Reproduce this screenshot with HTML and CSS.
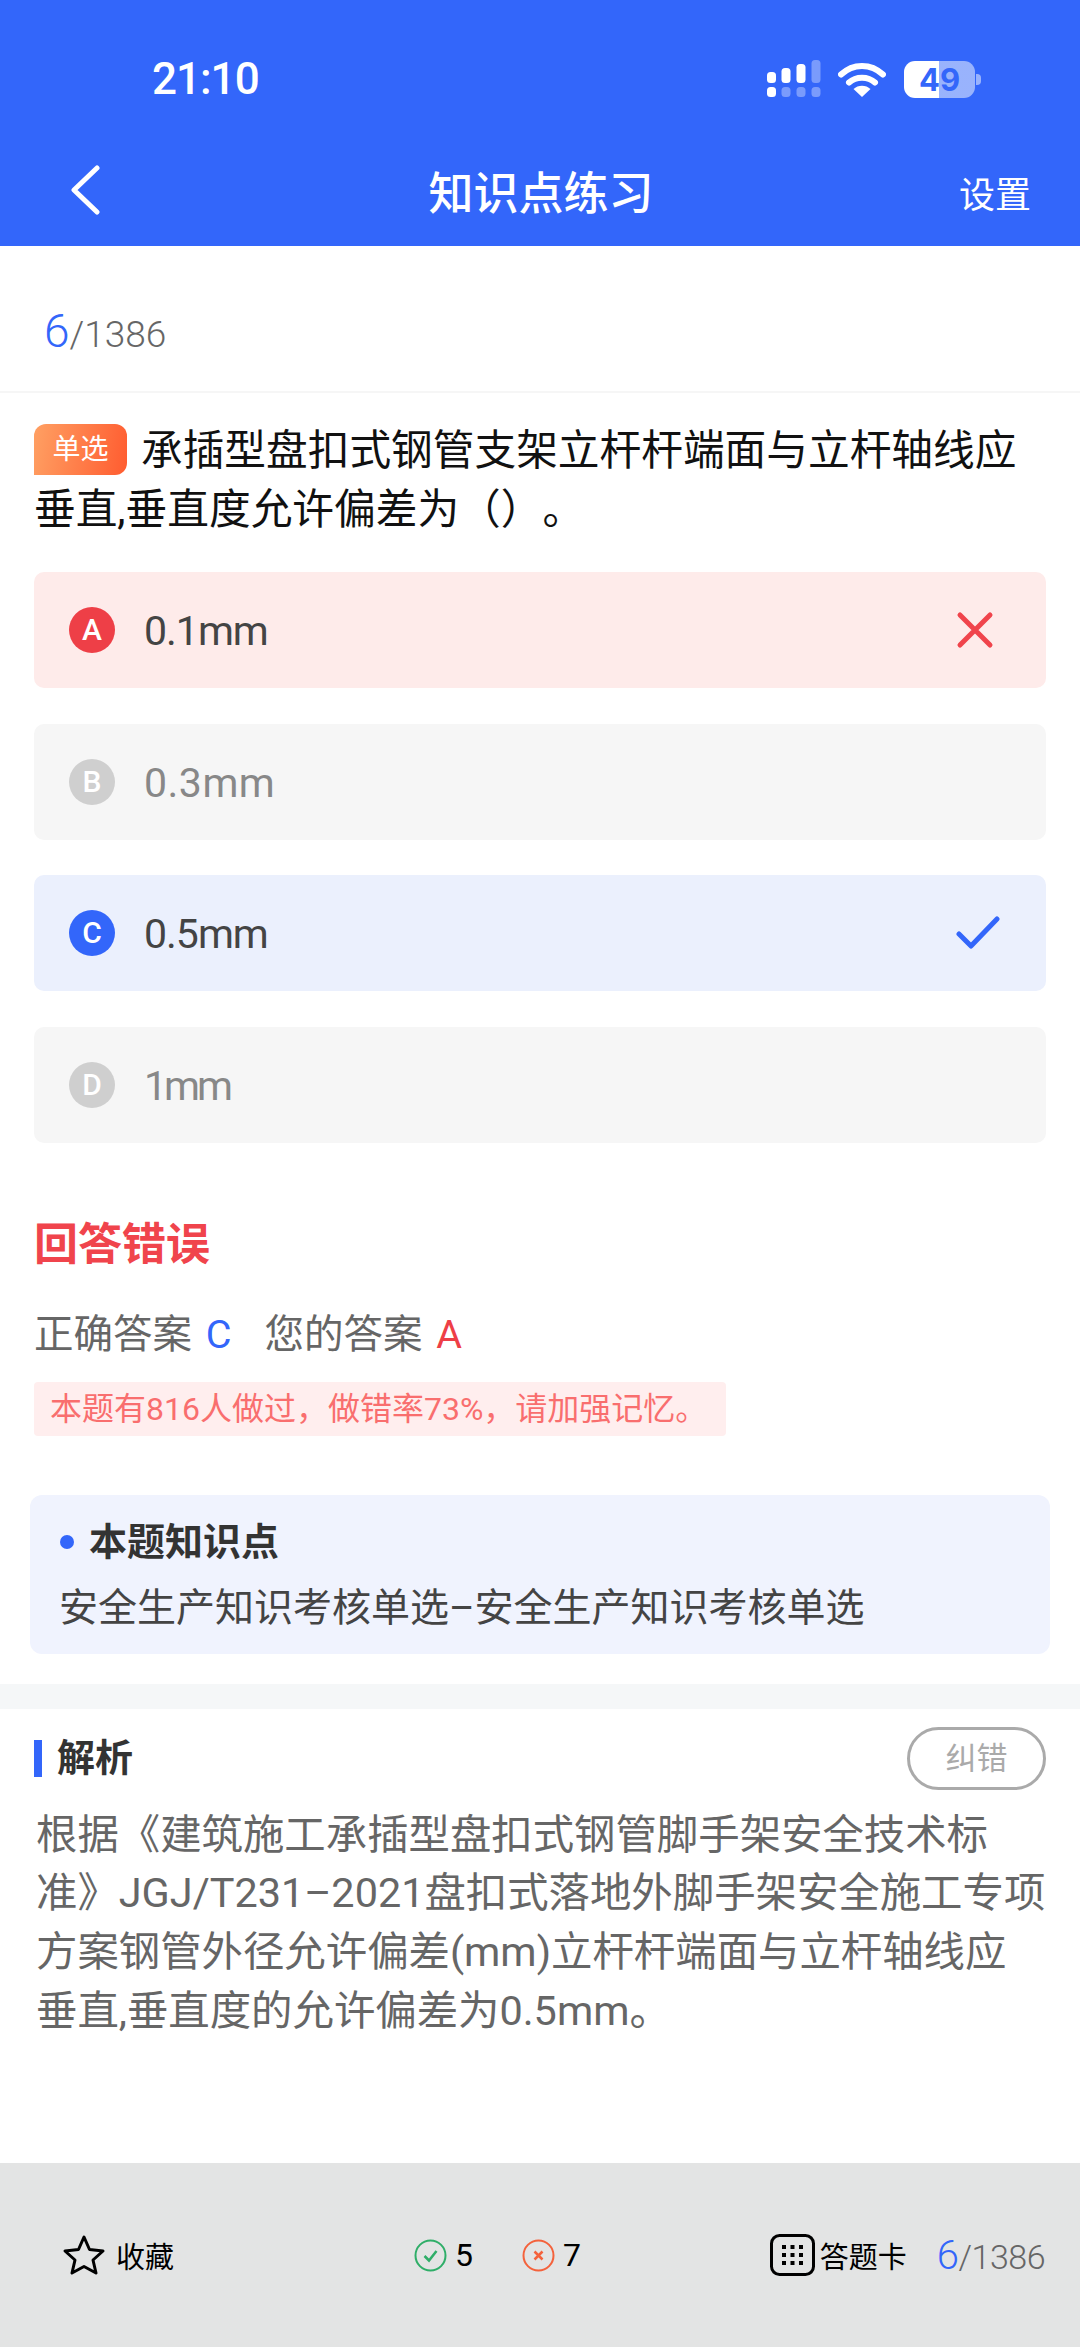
FILE: index.html
```html
<!DOCTYPE html>
<html lang="zh-CN">
<head>
	<meta charset="utf-8">
	<title>知识点练习</title>
	<link rel="stylesheet" href="styles.css">
</head>
<body>
<div class="page">
	<header class="top">
		<div class="status">
			<span class="time">21:10</span>
			<div class="status-icons">
				<svg class="signal" width="54" height="38" viewBox="0 0 54 38">
					<rect x="0" y="12" width="9" height="11" rx="3.5" fill="#fff"/>
					<rect x="14.500" y="8" width="9" height="15" rx="3.5" fill="#fff"/>
					<rect x="29.500" y="4" width="9" height="19" rx="3.5" fill="#fff"/>
					<rect x="44.500" y="0" width="9" height="23" rx="3.5" fill="#fff" fill-opacity=".35"/>
					<rect x="0" y="27" width="9" height="10" rx="3.500" fill="#fff"/>
					<rect x="14.500" y="27" width="9" height="10" rx="3.500" fill="#fff" fill-opacity=".35"/>
					<rect x="29.500" y="27" width="9" height="10" rx="3.500" fill="#fff" fill-opacity=".35"/>
					<rect x="44.500" y="27" width="9" height="10" rx="3.500" fill="#fff" fill-opacity=".35"/>
				</svg>
				<svg class="wifi" width="48" height="35" viewBox="0 0 48 35">
					<path d="M3 12.500 C15 1 33 1 45 12.500" fill="none" stroke="#fff" stroke-width="6" stroke-linecap="round"/>
					<path d="M11 20.500 C18 14 30 14 37 20.500" fill="none" stroke="#fff" stroke-width="6" stroke-linecap="round"/>
					<path d="M15.500 27 C20 22.500 28 22.500 32.500 27 L24 35 Z" fill="#fff"/>
				</svg>
				<div class="battery">
					<div class="battery-body">49</div>
					<div class="battery-nub"></div>
				</div>
			</div>
		</div>
		<nav class="nav">
			<svg class="back" width="30" height="50" viewBox="0 0 30 50">
				<path d="M27 3 L4 25 L27 47" fill="none" stroke="#fff" stroke-width="5" stroke-linecap="round" stroke-linejoin="round"/>
			</svg>
			<h1 class="nav-title">知识点练习</h1>
			<span class="nav-set">设置</span>
		</nav>
	</header>

	<main class="main">
		<div class="count-row">
			<span class="count"><span class="count-now">6</span>/1386</span>
		</div>

		<section class="question">
			<p class="q-text"><span class="tag">单选</span>承插型盘扣式钢管支架立杆杆端面与立杆轴线应垂直,垂直度允许偏差为（）。</p>
			<div class="options">
				<div class="option wrong">
					<span class="letter">A</span>
					<span class="opt-text">0.1mm</span>
					<svg class="opt-icon" width="38" height="38" viewBox="0 0 38 38">
						<path d="M4 4 L34 34 M34 4 L4 34" fill="none" stroke="#f0444c" stroke-width="5" stroke-linecap="round"/>
					</svg>
				</div>
				<div class="option muted">
					<span class="letter">B</span>
					<span class="opt-text wide">0.3mm</span>
				</div>
				<div class="option right">
					<span class="letter">C</span>
					<span class="opt-text">0.5mm</span>
					<svg class="opt-icon" width="44" height="38" viewBox="0 0 44 38">
						<path d="M3 20 L15 32 L41 5" fill="none" stroke="#3366fa" stroke-width="5" stroke-linecap="round" stroke-linejoin="round"/>
					</svg>
				</div>
				<div class="option muted">
					<span class="letter">D</span>
					<span class="opt-text tight">1mm</span>
				</div>
			</div>
		</section>

		<section class="result">
			<h2 class="result-title">回答错误</h2>
			<p class="answers">正确答案 <span class="ans-blue">C</span><span class="ans-mine">您的答案 <span class="ans-red">A</span></span></p>
			<p class="notice">本题有816人做过，做错率73%，请加强记忆。</p>
		</section>

		<section class="point">
			<h3 class="point-title"><span class="point-dot"></span>本题知识点</h3>
			<p class="point-text">安全生产知识考核单选–安全生产知识考核单选</p>
		</section>

		<div class="stripe"></div>

		<section class="analysis">
			<div class="analysis-head">
				<h3 class="analysis-title">解析</h3>
				<span class="report">纠错</span>
			</div>
			<p class="analysis-text">根据《建筑施工承插型盘扣式钢管脚手架安全技术标准》JGJ/T231–2021盘扣式落地外脚手架安全施工专项方案钢管外径允许偏差(mm)立杆杆端面与立杆轴线应垂直,垂直度的允许偏差为0.5mm。</p>
		</section>
	</main>

	<footer class="bottom">
		<div class="fav">
			<svg width="44" height="42" viewBox="0 0 44 42">
				<path d="M22 3 L27.500 15.500 L41 17 L31 26 L34 39 L22 32.500 L10 39 L13 26 L3 17 L16.500 15.500 Z" fill="none" stroke="#000" stroke-width="3" stroke-linejoin="round"/>
			</svg>
			<span>收藏</span>
		</div>
		<div class="tally">
			<svg width="33" height="33" viewBox="0 0 33 33">
				<circle cx="16.500" cy="16.500" r="15" fill="none" stroke="#2fae68" stroke-width="2"/>
				<path d="M10.500 17 L15 21.500 L22.500 12" fill="none" stroke="#2fae68" stroke-width="2.500"/>
			</svg>
			<span class="tally-num">5</span>
			<svg class="tally-wrong" width="33" height="33" viewBox="0 0 33 33">
				<circle cx="16.500" cy="16.500" r="15" fill="none" stroke="#f4623c" stroke-width="2"/>
				<path d="M12.500 12.500 L20.500 20.500 M20.500 12.500 L12.500 20.500" fill="none" stroke="#f4623c" stroke-width="2.500"/>
			</svg>
			<span class="tally-num">7</span>
		</div>
		<div class="card">
			<svg width="45" height="42" viewBox="0 0 45 42">
				<rect x="1.500" y="1.500" width="42" height="39" rx="8" fill="none" stroke="#000" stroke-width="3"/>
				<g fill="#000">
					<rect x="12" y="11" width="4" height="4"/><rect x="20.500" y="11" width="4" height="4"/><rect x="29" y="11" width="4" height="4"/>
					<rect x="12" y="19" width="4" height="4"/><rect x="20.500" y="19" width="4" height="4"/><rect x="29" y="19" width="4" height="4"/>
					<rect x="12" y="27" width="4" height="4"/><rect x="20.500" y="27" width="4" height="4"/><rect x="29" y="27" width="4" height="4"/>
				</g>
			</svg>
			<span class="card-label">答题卡</span>
			<span class="count count-small"><span class="count-now">6</span>/1386</span>
		</div>
	</footer>
</div>
</body>
</html>
```

FILE: styles.css
```css
* {
	box-sizing: border-box;
}
html, body {
	margin: 0;
	padding: 0;
}
body {
	width: 1080px;
	background-color: #fff;
	font-family: Roboto, "Noto Sans CJK SC", sans-serif;
	text-spacing-trim: space-all;
}
h1, h2, h3, p {
	margin: 0;
	font-weight: normal;
}
.page {
	display: flex;
	flex-direction: column;
	height: 2347px;
	overflow: hidden;
}

/* header */
.top {
	height: 246px;
	padding-top: 60px;
	background-color: #3366fa;
	color: #fff;
}
.status {
	display: flex;
	justify-content: space-between;
	align-items: center;
	height: 38px;
	padding: 0 99px 0 152px;
}
.time {
	font-size: 44px;
	font-weight: 500;
	letter-spacing: -1px;
}
.status-icons {
	display: flex;
	align-items: center;
}
.wifi {
	margin-left: 17px;
}
.battery {
	display: flex;
	align-items: center;
	margin-left: 18px;
}
.battery-body {
	width: 71px;
	height: 37px;
	border-radius: 11px;
	background: linear-gradient(90deg, #fff 49%, rgba(255, 255, 255, 0.5) 49%);
	color: #3366fa;
	font-family: Inter, sans-serif;
	font-size: 31px;
	font-weight: 700;
	line-height: 37px;
	text-align: center;
}
.battery-nub {
	width: 5px;
	height: 11px;
	margin-left: 1px;
	border-radius: 0 4px 4px 0;
	background-color: rgba(255, 255, 255, 0.5);
}
.nav {
	display: flex;
	align-items: center;
	height: 60px;
	margin-top: 62px;
	padding: 0 49px 0 70px;
}
.back {
	flex: none;
}
.nav-title {
	flex: 1;
	margin-left: 23px;
	font-size: 45px;
	font-weight: 500;
	text-align: center;
}
.nav-set {
	padding-top: 3px;
	font-size: 36px;
}

/* counter */
.main {
	flex: 1;
}
.count-row {
	display: flex;
	align-items: center;
	height: 147px;
	padding: 24px 0 0 44px;
	border-bottom: 2px solid #f6f6f6;
}
.count {
	color: #666;
	font-size: 37px;
	font-weight: 300;
}
.count-now {
	color: #3366fa;
	font-size: 46px;
}

/* question */
.question {
	padding: 28px 34px 0;
}
.q-text {
	color: #111;
	font-size: 41.700px;
	line-height: 59px;
}
.tag {
	display: inline-block;
	width: 93px;
	height: 51px;
	margin-right: 14px;
	border-radius: 12px 12px 12px 0;
	background: linear-gradient(100deg, #ffa063, #ff5c30);
	color: #fff;
	font-size: 28px;
	line-height: 51px;
	text-align: center;
	vertical-align: 6px;
}
.options {
	display: flex;
	flex-direction: column;
	gap: 35.500px;
	margin-top: 33px;
}
.option {
	display: flex;
	align-items: center;
	height: 116px;
	padding: 0 52px 0 35px;
	border-radius: 10px;
}
.letter {
	flex: none;
	width: 46px;
	height: 46px;
	border-radius: 50%;
	color: #fff;
	font-size: 30px;
	font-weight: 500;
	line-height: 46px;
	text-align: center;
}
.opt-text {
	flex: 1;
	margin-left: 29px;
	padding-top: 2px;
	font-size: 41px;
	letter-spacing: -1px;
}
.opt-text.wide {
	letter-spacing: 0.500px;
}
.opt-text.tight {
	letter-spacing: -3px;
}
.opt-icon {
	flex: none;
}
.wrong {
	background-color: #feebea;
}
.wrong .letter {
	background-color: #ee3f47;
}
.wrong .opt-text, .right .opt-text {
	color: #444;
}
.muted {
	background-color: #f6f6f6;
}
.muted .letter {
	background-color: #cfcfcf;
}
.muted .opt-text {
	color: #888;
}
.right {
	background-color: #ebf0fd;
}
.right .letter {
	background-color: #3366fa;
}
.right .opt-icon {
	margin-right: -6px;
}

/* result */
.result {
	padding: 70px 34px 0;
}
.result-title {
	color: #f0444c;
	font-size: 44px;
	font-weight: 700;
	line-height: 64px;
}
.answers {
	margin-top: 31px;
	color: #666;
	font-size: 39.500px;
	line-height: 54px;
}
.ans-blue {
	margin-left: 4px;
	color: #3366fa;
}
.ans-red {
	margin-left: 4px;
	color: #ee3f47;
}
.ans-mine {
	margin-left: 33px;
}
.notice {
	width: 692px;
	height: 54px;
	margin-top: 20px;
	padding-left: 16px;
	border-radius: 4px;
	background-color: #ffeeee;
	color: #f96e6e;
	font-size: 32px;
	line-height: 54px;
}

/* knowledge point */
.point {
	width: 1020px;
	height: 159px;
	margin: 59px 0 0 30px;
	padding: 20px 30px 0;
	border-radius: 12px;
	background-color: #f0f3fe;
}
.point-title {
	display: flex;
	align-items: center;
	color: #333;
	font-size: 38px;
	font-weight: 700;
	line-height: 54px;
}
.point-dot {
	width: 14px;
	height: 14px;
	margin-right: 15px;
	border-radius: 50%;
	background-color: #3366fa;
}
.point-text {
	margin-top: 12px;
	margin-left: -1px;
	color: #444;
	font-size: 39px;
	line-height: 54px;
}
.stripe {
	height: 25px;
	margin-top: 30px;
	background-color: #f5f7f8;
}

/* analysis */
.analysis {
	padding: 18px 34px 0 36px;
}
.analysis-head {
	display: flex;
	justify-content: space-between;
	align-items: center;
	height: 63px;
}
.analysis-title {
	margin-left: -2px;
	padding-left: 15px;
	border-left: 8px solid #3366fa;
	color: #333;
	font-size: 38px;
	font-weight: 700;
	line-height: 37px;
}
.report {
	width: 139px;
	height: 63px;
	border: 3px solid #aaa;
	border-radius: 32px;
	color: #aaa;
	font-size: 31px;
	line-height: 57px;
	text-align: center;
}
.analysis-text {
	margin-top: 16px;
	color: #666;
	font-size: 41.400px;
	line-height: 58.700px;
}

/* bottom bar */
.bottom {
	display: flex;
	align-items: center;
	height: 184px;
	padding: 0 35px 0 62px;
	background-color: #e3e4e4;
	color: #000;
	font-size: 29px;
}
.bottom > div {
	display: flex;
	align-items: center;
}
.bottom svg {
	flex: none;
}
.fav span {
	margin-left: 10px;
}
.tally {
	margin-left: 240px;
}
.tally-num {
	width: 25px;
	margin-left: 8px;
	font-size: 32px;
}
.tally-wrong {
	margin-left: 42px;
}
.card {
	margin-left: auto;
}
.card-label {
	margin-left: 5px;
}
.count-small {
	margin-left: 30px;
	font-size: 34px;
	letter-spacing: -0.500px;
}
.count-small .count-now {
	font-size: 40px;
}
```
